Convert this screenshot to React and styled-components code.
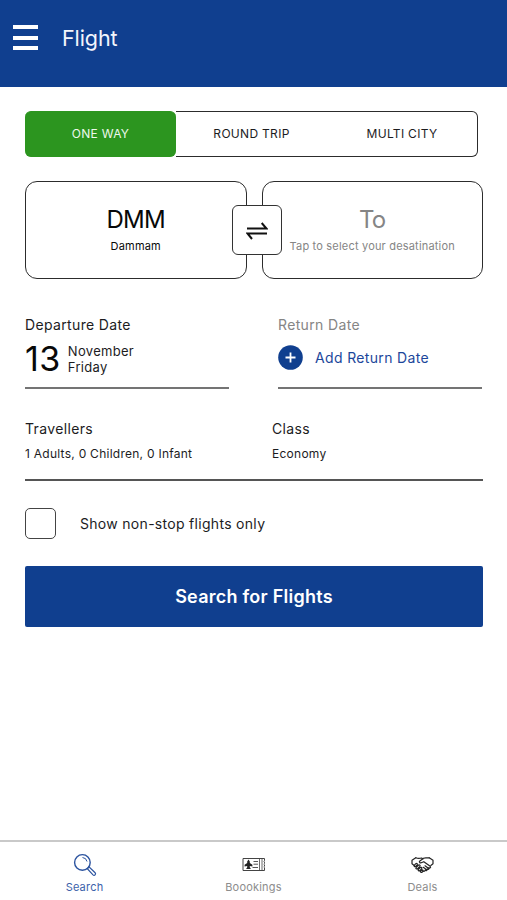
import React from "react";
import styled, { createGlobalStyle } from "styled-components";

const blue = "#103f8f";
const ink = "#1c1c1e";

const GlobalStyle = createGlobalStyle`
  * { box-sizing: border-box; }
  html, body { margin: 0; padding: 0; background: #fff; }
  body { font-family: Inter, "Liberation Sans", sans-serif; color: ${ink}; }
  button { font: inherit; color: inherit; background: none; border: 0; padding: 0; margin: 0; }
`;

const Screen = styled.div`
  width: 507px;
  height: 900px;
  display: flex;
  flex-direction: column;
  background: #fff;
  overflow: hidden;
`;

const Header = styled.header`
  height: 87px;
  padding: 0 0 12px 13px;
  display: flex;
  align-items: center;
  gap: 24px;
  background: ${blue};
  color: #f3f6fc;
`;

const MenuButton = styled.button`
  width: 25px;
  height: 25px;
  display: flex;
  flex-direction: column;
  justify-content: space-between;
`;

const MenuBar = styled.span`
  height: 4px;
  background: #fff;
`;

const Title = styled.h1`
  margin: 0;
  font-size: 21.5px;
  font-weight: 400;
  line-height: 30px;
  letter-spacing: -0.1px;
`;

const Main = styled.main`
  flex: 1;
  padding: 24px 24px 0 25px;
  display: flex;
  flex-direction: column;
`;

const Tabs = styled.div`
  width: 453px;
  height: 46px;
  display: grid;
  grid-template-columns: repeat(3, 1fr);
`;

const Tab = styled.button`
  && {
    border: solid ${(p) => (p.$active ? "#2c951f" : "#2c2c2c")};
    border-width: 1px 0;
    background: ${(p) => (p.$active ? "#2c951f" : "transparent")};
    color: ${(p) => (p.$active ? "#eef8ec" : ink)};
    font-size: 12px;
    padding-bottom: 1px;
  }
  border-radius: ${(p) => (p.$active ? "6px" : "0")};
  letter-spacing: 0.3px;

  &&:last-child {
    border-right-width: 1px;
    border-radius: 0 6px 6px 0;
  }
`;

const Route = styled.div`
  position: relative;
  margin-top: 24px;
  display: grid;
  grid-template-columns: 1fr 1fr;
  gap: 15px;
  height: 98px;
`;

const Airport = styled.button`
  && {
    border: 1px solid #2c2c2c;
    padding-top: 23px;
    color: ${(p) => (p.$empty ? "#858585" : "#080808")};
  }
  border-radius: 12px;
  display: flex;
  flex-direction: column;
  align-items: center;
`;

const Code = styled.span`
  font-size: 24px;
  line-height: 30px;
  letter-spacing: -0.7px;
`;

const City = styled.span`
  font-size: 11px;
  line-height: 20px;
  margin-top: 1px;
  letter-spacing: 0.19px;
  white-space: nowrap;
`;

const Swap = styled.button`
  position: absolute;
  left: 207px;
  top: 24px;
  width: 50px;
  height: 50px;
  display: grid;
  place-items: center;
  && {
    background: #fff;
    border: 1px solid #333;
    padding-top: 2px;
  }
  border-radius: 6px;
`;

const Dates = styled.div`
  margin-top: 36px;
  display: grid;
  grid-template-columns: 204px 204px;
  justify-content: space-between;
  padding-right: 1px;
`;

const DateField = styled.div`
  height: 74px;
  border-bottom: 2px solid #747474;
`;

const Label = styled.div`
  font-size: 14px;
  line-height: 20px;
  letter-spacing: 0.35px;
  color: ${(p) => (p.$muted ? "#858585" : ink)};
`;

const DateValue = styled.div`
  height: 48px;
  display: flex;
  align-items: center;
  gap: 7px;
`;

const Day = styled.span`
  font-size: 34px;
  line-height: 40px;
  color: #080808;
  letter-spacing: 0.5px;
`;

const MonthDay = styled.span`
  font-size: 13px;
  line-height: 16px;
  letter-spacing: 0.3px;
`;

const AddReturn = styled.button`
  && {
    color: #1c479b;
    font-size: 14px;
  }
  height: 44px;
  display: flex;
  align-items: center;
  gap: 12px;
  letter-spacing: 0.35px;
`;

const Details = styled.div`
  margin-top: 30px;
  height: 62px;
  display: grid;
  grid-template-columns: 247px 1fr;
  border-bottom: 2px solid #555;
`;

const Detail = styled.div`
  font-size: 12px;
  letter-spacing: 0.26px;
`;

const DetailValue = styled.div`
  margin-top: 5px;
  line-height: 20px;
`;

const NonStop = styled.label`
  margin-top: 27px;
  display: flex;
  align-items: center;
  gap: 24px;
  font-size: 14px;
  letter-spacing: 0.3px;
`;

const Checkbox = styled.input`
  appearance: none;
  width: 31px;
  height: 31px;
  margin: 0;
  border: 1px solid #444;
  border-radius: 5px;
`;

const SearchButton = styled.button`
  margin-top: 27px;
  height: 61px;
  border-radius: 2px;
  && {
    background: ${blue};
    color: #fff;
    font-size: 18px;
    font-weight: 600;
  }
  letter-spacing: 0.25px;
`;

const Nav = styled.nav`
  height: 60px;
  border-top: 2px solid #c9c9c9;
  display: grid;
  grid-template-columns: repeat(3, 1fr);
`;

const NavItem = styled.button`
  && {
    padding-top: 11px;
    color: ${(p) => (p.$active ? "#3c61aa" : "#8d8d8d")};
    font-size: 11px;
    line-height: 14px;
  }
  display: flex;
  flex-direction: column;
  align-items: center;
  letter-spacing: 0.2px;
`;

const NavIcon = styled.span`
  height: 24px;
  margin-bottom: 3px;
  display: grid;
  place-items: center;
`;

const SwapIcon = () => (
  <svg width="22" height="18" viewBox="0 0 22 18" fill="none" stroke="#111" strokeWidth="2">
    <path d="M1 6.5H20.5L15.7 1" />
    <path d="M21 11.5H1.5L6 17" />
  </svg>
);

const PlusIcon = () => (
  <svg width="25" height="25" viewBox="0 0 25 25">
    <circle cx="12.5" cy="12.5" r="12.3" fill={blue} />
    <path d="M12.5 7.5v10M7.5 12.5h10" stroke="#fff" strokeWidth="1.8" />
  </svg>
);

const SearchIcon = () => (
  <svg width="24" height="24" viewBox="0 0 24 24" fill="none" stroke="#2b539f" strokeWidth="1.4">
    <circle cx="9.4" cy="9.4" r="7.8" />
    <path d="M9.5 4.5a5 5 0 0 1 4.5 4" strokeWidth="1" />
    <path d="M14.8 15.1l1.2-1.2 6.1 5.8c.7.8.7 1.4 0 2.1s-1.4.7-2.1 0l-5.7-6.1z" strokeWidth="1.2" />
  </svg>
);

const TicketIcon = () => (
  <svg width="24" height="16" viewBox="0 0 24 16" fill="none" stroke="#444" strokeWidth="1">
    <path d="M1 1.5h21.5v2.2c-.8.5-.8 1 0 1.5v1.2c-.8.5-.8 1 0 1.5v1.3c-.8.5-.8 1 0 1.5v2.8H1z" />
    <path d="M17.5 1.5v12M20 2v11" strokeWidth=".8" />
    <path d="M6.5 2.6l1.3 1.8v1.5l2.6 1.9v1.6L7.8 8.9v1.4l1.1 1.7H4.1l1.1-1.7V8.9l-2.6.5V7.8l2.6-1.9V4.4z" fill="#222" stroke="none" />
    <path d="M11.5 4.5H16M11.5 7.2H16M10.5 10.5H16" strokeWidth=".9" />
  </svg>
);

const HandshakeIcon = () => (
  <svg width="23" height="18" viewBox="0 0 23 18" fill="none" stroke="#242424" strokeWidth="1.2" strokeLinejoin="round" strokeLinecap="round">
    <path d="M4.8 1.8L1 4.2v3.6l2.2 1.6M18.2 1.8L22 4.2v3.6l-2.2 1.6" />
    <path d="M4.8 1.8c2 .8 3.9.7 5.8.2L12 3M18.2 1.8c-2.2.5-4-.3-5.7.5L8.6 5.2c-.7 1 .5 2 1.6 1.6l2.6-1.1 6.4 4.6c1 1-.2 2.2-1.3 1.5" />
    <path d="M17.9 11.8c.6 1.3-.7 2.1-1.8 1.3.3 1.3-.9 1.8-1.9 1.1-.2 1-1.3 1.4-2.3.8l-1-.7M14 9.8l3 2.3M12.3 11.3l3 2.3" />
    <path d="M3.2 9.4l1.6-1.7c1.1-.6 2 .2 1.4 1.1L4.8 10.3c-1.1.6-2-.1-1.6-.9zM5 11.7l2.5-2.6c1.2-.6 2 .2 1.4 1.2l-2.3 2.4c-1.2.6-2.1-.1-1.6-1zM7.2 13.6l2.1-2.1c1.2-.6 2 .2 1.4 1.2L8.9 14.6c-1.1.5-2-.1-1.7-1zM9.4 15.3l1.3-1.3c1.1-.4 1.8.5 1.2 1.4l-.7.8c-1 .5-1.9 0-1.8-.9z" />
  </svg>
);

const navItems = [
  { label: "Search", Icon: SearchIcon, active: true },
  { label: "Boookings", Icon: TicketIcon },
  { label: "Deals", Icon: HandshakeIcon },
];

export default function App() {
  return (
    <>
      <GlobalStyle />
      <Screen>
        <Header>
          <MenuButton aria-label="Menu">
            <MenuBar />
            <MenuBar />
            <MenuBar />
          </MenuButton>
          <Title>Flight</Title>
        </Header>
        <Main>
          <Tabs>
            <Tab $active>ONE WAY</Tab>
            <Tab>ROUND TRIP</Tab>
            <Tab>MULTI CITY</Tab>
          </Tabs>
          <Route>
            <Airport>
              <Code>DMM</Code>
              <City>Dammam</City>
            </Airport>
            <Airport $empty>
              <Code>To</Code>
              <City>Tap to select your desatination</City>
            </Airport>
            <Swap aria-label="Swap airports">
              <SwapIcon />
            </Swap>
          </Route>
          <Dates>
            <DateField>
              <Label>Departure Date</Label>
              <DateValue>
                <Day>13</Day>
                <MonthDay>
                  November
                  <br />
                  Friday
                </MonthDay>
              </DateValue>
            </DateField>
            <DateField>
              <Label $muted>Return Date</Label>
              <AddReturn>
                <PlusIcon />
                Add Return Date
              </AddReturn>
            </DateField>
          </Dates>
          <Details>
            <Detail>
              <Label>Travellers</Label>
              <DetailValue>1 Adults, 0 Children, 0 Infant</DetailValue>
            </Detail>
            <Detail>
              <Label>Class</Label>
              <DetailValue>Economy</DetailValue>
            </Detail>
          </Details>
          <NonStop>
            <Checkbox type="checkbox" />
            Show non-stop flights only
          </NonStop>
          <SearchButton>Search for Flights</SearchButton>
        </Main>
        <Nav>
          {navItems.map(({ label, Icon, active }) => (
            <NavItem key={label} $active={active}>
              <NavIcon>
                <Icon />
              </NavIcon>
              {label}
            </NavItem>
          ))}
        </Nav>
      </Screen>
    </>
  );
}
